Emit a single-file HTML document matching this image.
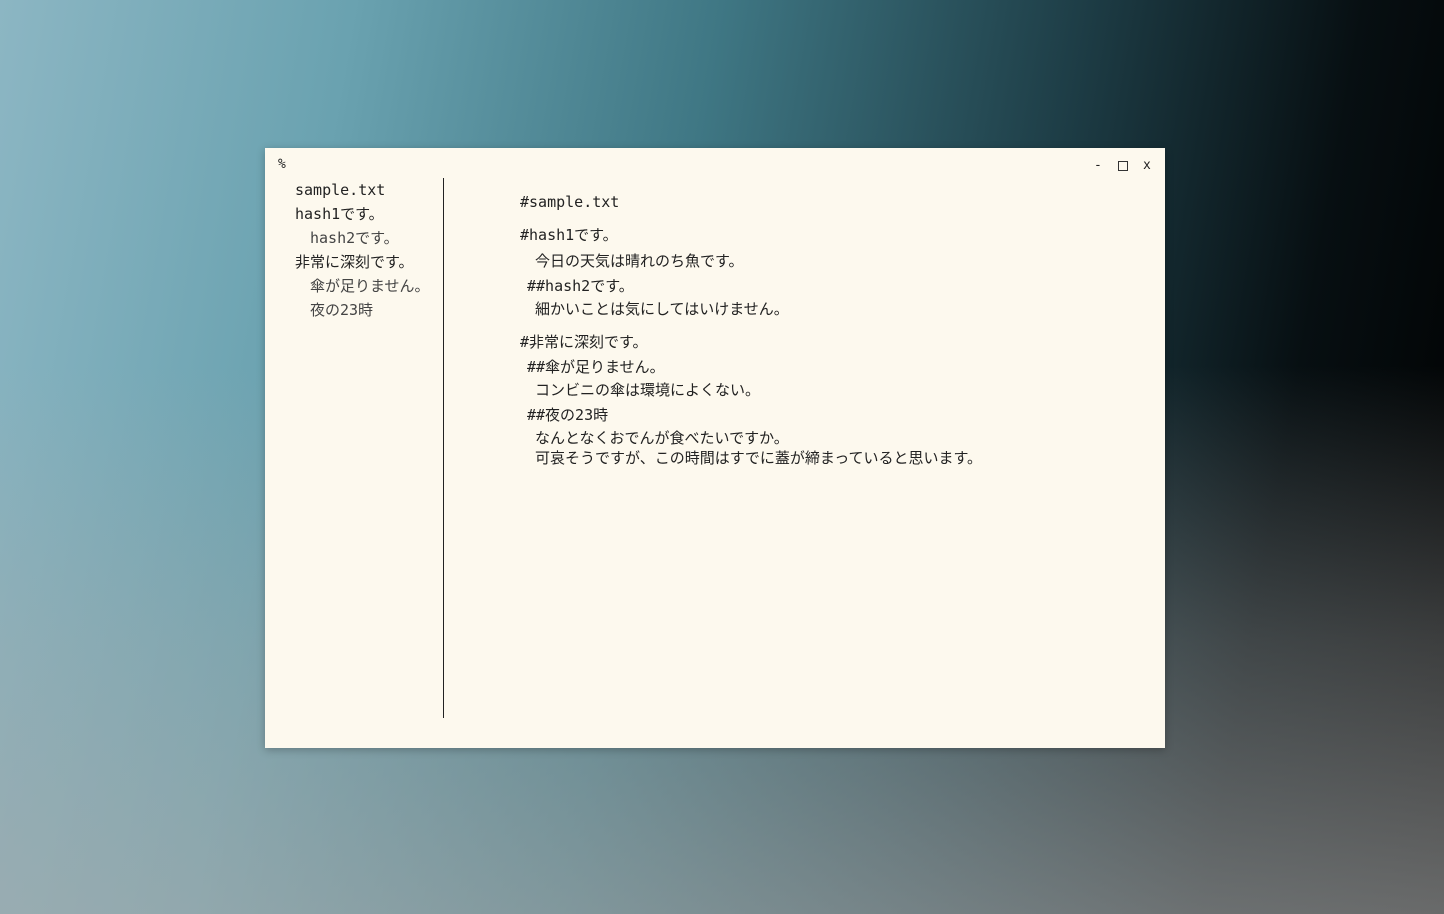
<!DOCTYPE html>
<html><head><meta charset="utf-8"><style>
html,body{margin:0;padding:0;width:1444px;height:914px;overflow:hidden}
body{position:relative;background:
linear-gradient(to bottom, rgba(170,172,172,0) 0%, rgba(170,172,172,0) 40%, rgba(170,172,172,0.35) 70%, rgba(170,172,172,0.62) 100%),
linear-gradient(100deg,#8cb6c3 0%,#6aa2b0 22%,#3f7784 45%,#1d3c45 68%,#070f12 85%,#000 100%);}
.win{position:absolute;left:265px;top:148px;width:900px;height:600px;background:#fdf9ee;box-shadow:0 2px 8px rgba(0,0,0,0.25)}
.t{position:absolute;font-family:"DejaVu Sans Mono","Liberation Mono","Noto Sans CJK JP",monospace;font-size:15px;line-height:20px;color:#222;white-space:pre}
.l{color:#444}
.div{position:absolute;left:178px;top:30px;width:1px;height:540px;background:#222}
</style></head><body>
<div class="win">
<div class="t" style="left:13px;top:7px;font-size:13px">%</div>
<div class="t" style="left:829px;top:8px;font-size:13px">-</div>
<div style="position:absolute;left:853px;top:13px;width:8px;height:8px;border:1px solid #333"></div>
<div class="t" style="left:878px;top:8px;font-size:13px">x</div>
<div class="div"></div>
<div class="t" style="left:30px;top:32px">sample.txt</div>
<div class="t" style="left:30px;top:56px">hash1です。</div>
<div class="t l" style="left:45px;top:80px">hash2です。</div>
<div class="t" style="left:30px;top:104px">非常に深刻です。</div>
<div class="t l" style="left:45px;top:128px">傘が足りません。</div>
<div class="t l" style="left:45px;top:152px">夜の23時</div>

<div class="t" style="left:255px;top:44px">#sample.txt</div>
<div class="t" style="left:255px;top:77px">#hash1です。</div>
<div class="t" style="left:270px;top:103px">今日の天気は晴れのち魚です。</div>
<div class="t" style="left:262px;top:128px">##hash2です。</div>
<div class="t" style="left:270px;top:151px">細かいことは気にしてはいけません。</div>
<div class="t" style="left:255px;top:184px">#非常に深刻です。</div>
<div class="t" style="left:262px;top:209px">##傘が足りません。</div>
<div class="t" style="left:270px;top:232px">コンビニの傘は環境によくない。</div>
<div class="t" style="left:262px;top:257px">##夜の23時</div>
<div class="t" style="left:270px;top:280px">なんとなくおでんが食べたいですか。</div>
<div class="t" style="left:270px;top:300px">可哀そうですが、この時間はすでに蓋が締まっていると思います。</div>
</div>
</body></html>
